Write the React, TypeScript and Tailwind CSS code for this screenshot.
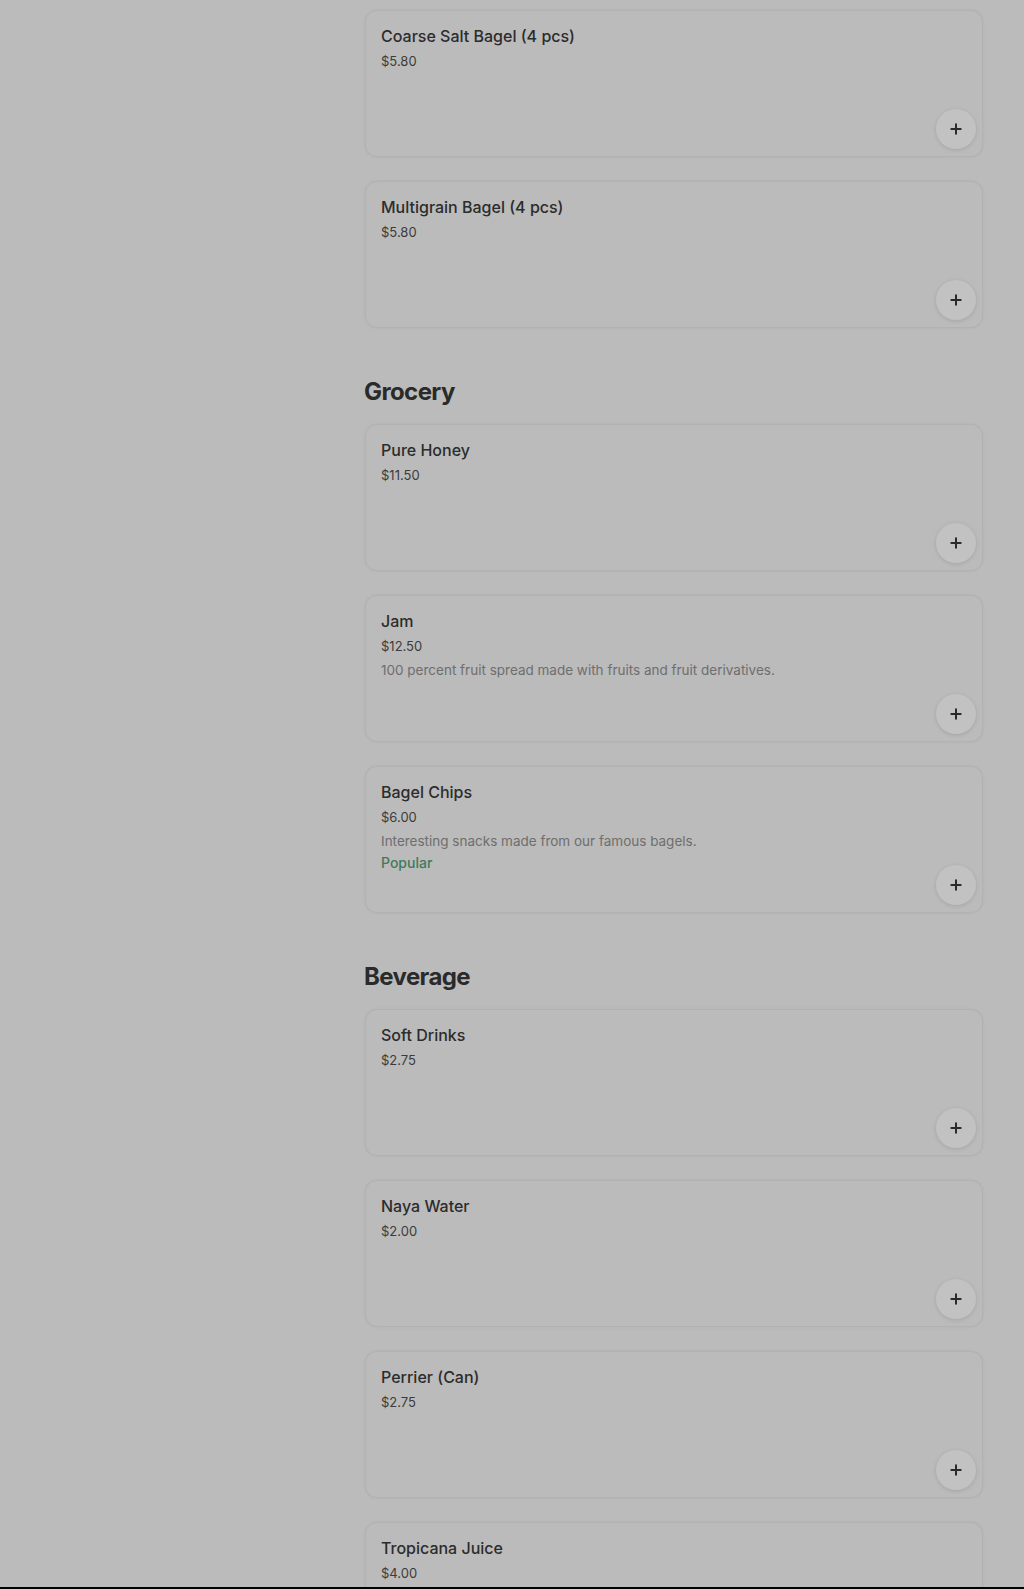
import { Plus } from "lucide-react";

type Item = {
  name: string;
  price: string;
  description?: string;
  popular?: boolean;
};

const sections: { title?: string; items: Item[] }[] = [
  {
    items: [
      { name: "Coarse Salt Bagel (4 pcs)", price: "$5.80" },
      { name: "Multigrain Bagel (4 pcs)", price: "$5.80" },
    ],
  },
  {
    title: "Grocery",
    items: [
      { name: "Pure Honey", price: "$11.50" },
      {
        name: "Jam",
        price: "$12.50",
        description: "100 percent fruit spread made with fruits and fruit derivatives.",
      },
      {
        name: "Bagel Chips",
        price: "$6.00",
        description: "Interesting snacks made from our famous bagels.",
        popular: true,
      },
    ],
  },
  {
    title: "Beverage",
    items: [
      { name: "Soft Drinks", price: "$2.75" },
      { name: "Naya Water", price: "$2.00" },
      { name: "Perrier (Can)", price: "$2.75" },
      { name: "Tropicana Juice", price: "$4.00" },
    ],
  },
];

function MenuCard({ item }: { item: Item }) {
  return (
    <div className="relative h-[147px] shrink-0 rounded-xl border border-[#b2b2b2] bg-[#bbbbbb] px-[15px] pt-[13px] shadow-[0_0_3px_rgba(0,0,0,0.06)]">
      <div className="text-base leading-6 font-medium text-[#2c2c2c]">{item.name}</div>
      <div className="mt-px text-[13px] leading-6 text-[#3b3b3b]">{item.price}</div>
      {item.description && (
        <div className="text-[13.5px] leading-6 text-[#6e6e6e]">{item.description}</div>
      )}
      {item.popular && (
        <div className="text-sm leading-5 font-medium text-[#3f7a58]">Popular</div>
      )}
      <button className="absolute right-[6px] bottom-[7px] flex h-10 w-10 items-center justify-center rounded-full bg-[#c2c2c2] shadow-[0_1px_4px_rgba(0,0,0,0.12)]">
        <Plus size={16} strokeWidth={3} className="text-[#2a2a2a]" />
      </button>
    </div>
  );
}

export default function App() {
  return (
    <div className="h-[1589px] overflow-hidden bg-[#bbbbbb] font-['Inter',sans-serif]">
      <div className="flex h-[1587px] overflow-hidden pt-[10px]">
        <div className="w-[365px] shrink-0" />
        <main className="flex w-[618px] flex-col">
          {sections.map((section, i) => (
            <section key={i} className={section.title ? "mt-[48px]" : ""}>
              {section.title && (
                <h2 className="mb-[16px] -ml-px text-2xl leading-8 font-bold tracking-tight text-[#2a2a2a]">
                  {section.title}
                </h2>
              )}
              <div className="flex flex-col gap-6">
                {section.items.map((item) => (
                  <MenuCard key={item.name} item={item} />
                ))}
              </div>
            </section>
          ))}
        </main>
      </div>
      <div className="h-[2px] bg-black" />
    </div>
  );
}
